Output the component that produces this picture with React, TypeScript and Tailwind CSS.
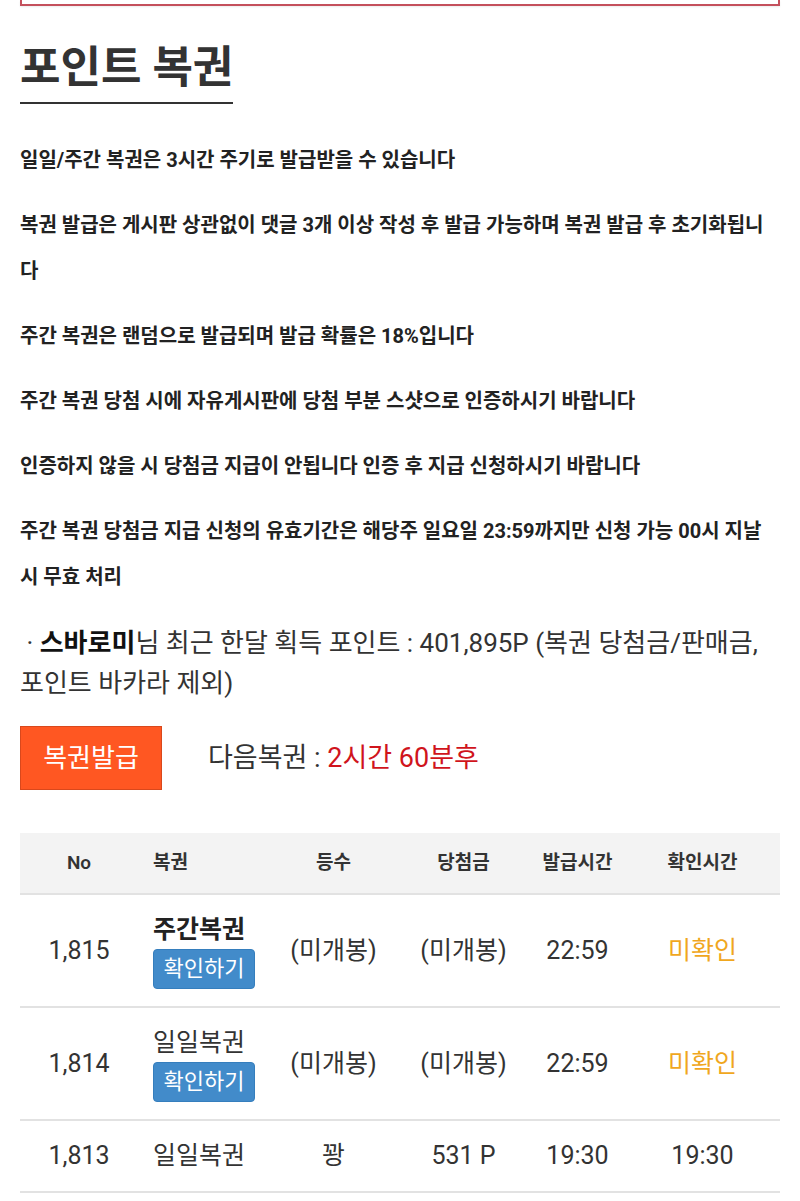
const rows = [
  { no: "1,815", name: "주간복권", bold: true, check: true, rank: "(미개봉)", prize: "(미개봉)", issued: "22:59", seen: "미확인" },
  { no: "1,814", name: "일일복권", bold: false, check: true, rank: "(미개봉)", prize: "(미개봉)", issued: "22:59", seen: "미확인" },
  { no: "1,813", name: "일일복권", bold: false, check: false, rank: "꽝", prize: "531 P", issued: "19:30", seen: "19:30" },
];

const notices = [
  "일일/주간 복권은 3시간 주기로 발급받을 수 있습니다",
  "복권 발급은 게시판 상관없이 댓글 3개 이상 작성 후 발급 가능하며 복권 발급 후 초기화됩니다",
  "주간 복권은 랜덤으로 발급되며 발급 확률은 18%입니다",
  "주간 복권 당첨 시에 자유게시판에 당첨 부분 스샷으로 인증하시기 바랍니다",
  "인증하지 않을 시 당첨금 지급이 안됩니다 인증 후 지급 신청하시기 바랍니다",
  "주간 복권 당첨금 지급 신청의 유효기간은 해당주 일요일 23:59까지만 신청 가능 00시 지날 시 무효 처리",
];

const cols = "grid grid-cols-[118px_132px_127px_133px_95px_155px]";

export default function App() {
  return (
    <div className="min-h-screen bg-white px-5 text-[#333] font-['Roboto','Noto_Sans_CJK_KR',sans-serif]">
      {/* cut-off box at top */}
      <div className="h-[6px] border-2 border-t-0 border-[#c4505c] shadow-[0_1px_2px_rgba(0,0,0,0.08)]" />

      {/* TITLE */}
      <h1 className="mt-[36px] inline-block border-b-2 border-[#333] pb-[8px] text-[44px] font-bold leading-[52px] text-[#333]">
        포인트 복권
      </h1>

      {/* NOTICES */}
      <div className="mt-[33px] space-y-[19px]">
        {notices.map((t) => (
          <p key={t} className="text-[20px] font-bold leading-[46px] text-[#222] break-all">
            {t}
          </p>
        ))}
      </div>

      {/* POINTS */}
      <p className="mt-[23px] text-[26px] leading-[40px] text-[#333]">
        &nbsp;· <b className="font-bold text-[#111]">스바로미</b>님 최근 한달 획득 포인트 : 401,895P (복권 당첨금/판매금,
        포인트 바카라 제외)
      </p>

      {/* ISSUE */}
      <div className="mt-[23px] flex items-center gap-[46px]">
        <button className="h-[64px] w-[142px] border border-[#d9481c] bg-[#ff5722] text-[26px] text-white">
          복권발급
        </button>
        <p className="text-[27px] text-[#333]">
          다음복권 : <span className="text-[#d0141c]">2시간 60분후</span>
        </p>
      </div>

      {/* TABLE */}
      <div className="mt-[43px]">
        <div className={`${cols} h-[62px] items-center border-b-2 border-[#e2e2e2] bg-[#f3f3f3] text-[19px] font-semibold text-[#333]`}>
          <div className="text-center">No</div>
          <div className="pl-[15px]">복권</div>
          <div className="text-center">등수</div>
          <div className="text-center">당첨금</div>
          <div className="text-center">발급시간</div>
          <div className="text-center">확인시간</div>
        </div>

        {rows.map((r) => (
          <div
            key={r.no}
            className={`${cols} ${r.check ? "h-[113px]" : "h-[72px]"} items-center border-b-2 border-[#e2e2e2] text-[25px] text-[#333]`}
          >
            <div className="text-center">{r.no}</div>
            <div className="pl-[15px]">
              <div className={`leading-[34px] ${r.bold ? "font-bold text-[#222]" : ""}`}>{r.name}</div>
              {r.check && (
                <button className="mt-[2px] h-[40px] w-[102px] rounded-[4px] border border-[#357ebd] bg-[#428bca] text-[22px] leading-none text-white">
                  확인하기
                </button>
              )}
            </div>
            <div className="text-center">{r.rank}</div>
            <div className="text-center">{r.prize}</div>
            <div className="text-center">{r.issued}</div>
            <div className={`text-center ${r.seen === "미확인" ? "text-[#f0a71e]" : ""}`}>{r.seen}</div>
          </div>
        ))}
      </div>
    </div>
  );
}
